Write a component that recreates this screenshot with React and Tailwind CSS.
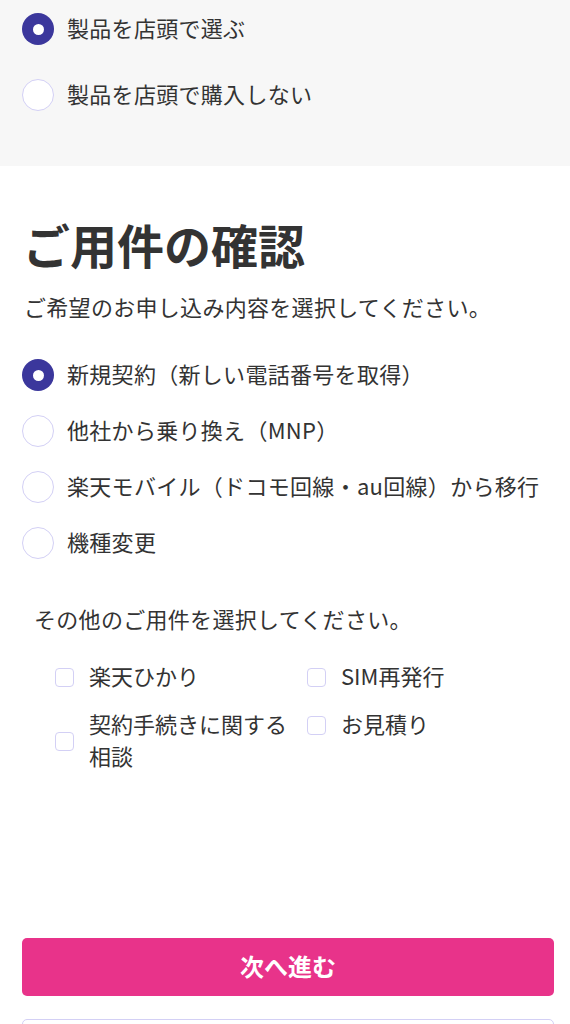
import React, { useState } from "react";

const font = { fontFamily: '"Noto Sans CJK JP", "Noto Sans", sans-serif' };

function Radio({ checked, label, onClick }) {
  return (
    <button type="button" onClick={onClick} className="flex h-[44px] items-center gap-[13px] text-left">
      {checked ? (
        <span className="flex h-[32px] w-[32px] shrink-0 items-center justify-center rounded-full bg-[#3b379c]">
          <span className="h-[11px] w-[11px] rounded-full bg-white" />
        </span>
      ) : (
        <span className="h-[32px] w-[32px] shrink-0 rounded-full border-[1.5px] border-[#d3d0f5] bg-white" />
      )}
      <span className="pb-[5px] text-[22px] leading-[32px] tracking-[0.3px] text-[#333]">{label}</span>
    </button>
  );
}

function Check({ label }) {
  const [on, setOn] = useState(false);
  return (
    <button type="button" onClick={() => setOn(!on)} className="flex items-center gap-[15px] text-left">
      <span
        className={
          "h-[19px] w-[19px] shrink-0 rounded-[4px] border-[1.5px] " +
          (on ? "border-[#3b379c] bg-[#3b379c]" : "border-[#d3d0f5] bg-white")
        }
      />
      <span className="pb-[4px] text-[22px] leading-[32px] text-[#333]">{label}</span>
    </button>
  );
}

export default function App() {
  const [shop, setShop] = useState(0);
  const [purpose, setPurpose] = useState(0);

  const shopOpts = ["製品を店頭で選ぶ", "製品を店頭で購入しない"];
  const purposes = [
    "新規契約（新しい電話番号を取得）",
    "他社から乗り換え（MNP）",
    "楽天モバイル（ドコモ回線・au回線）から移行",
    "機種変更",
  ];

  return (
    <div style={font} className="min-h-screen w-[570px] bg-white">
      <div className="flex flex-col gap-[22px] bg-[#f7f7f7] pb-[49px] pl-[22px] pt-[7px]">
        {shopOpts.map((o, i) => (
          <Radio key={o} label={o} checked={shop === i} onClick={() => setShop(i)} />
        ))}
      </div>

      <div className="pt-[50px]">
        <h2 className="pl-[23px] text-[47px] font-bold leading-[56px] text-[#333]">ご用件の確認</h2>
        <p className="mt-[18px] pl-[24px] text-[22px] leading-[32px] tracking-[0.3px] text-[#333]">
          ご希望のお申し込み内容を選択してください。
        </p>

        <div className="mt-[31px] flex flex-col gap-[12px] pl-[22px]">
          {purposes.map((p, i) => (
            <Radio key={p} label={p} checked={purpose === i} onClick={() => setPurpose(i)} />
          ))}
        </div>

        <p className="mt-[37px] pl-[34px] text-[22px] leading-[32px] tracking-[0.3px] text-[#333]">
          その他のご用件を選択してください。
        </p>

        <div className="ml-[55px] mt-[25px] grid w-[504px] grid-cols-[252px_252px] items-start gap-y-[12px]">
          <Check label="楽天ひかり" />
          <Check label="SIM再発行" />
          <Check label="契約手続きに関する相談" />
          <Check label="お見積り" />
        </div>

        <div className="ml-[22px] mr-[16px] mt-[163px]">
          <button
            type="button"
            className="flex h-[58px] w-full items-center justify-center rounded-[5px] bg-[#e8338a] pb-[3px] text-[24px] font-bold text-white"
          >
            次へ進む
          </button>
          <div className="mt-[23px] h-[58px] w-full rounded-[5px] border-[1.5px] border-[#d3d0f5] bg-white" />
        </div>
      </div>
    </div>
  );
}
